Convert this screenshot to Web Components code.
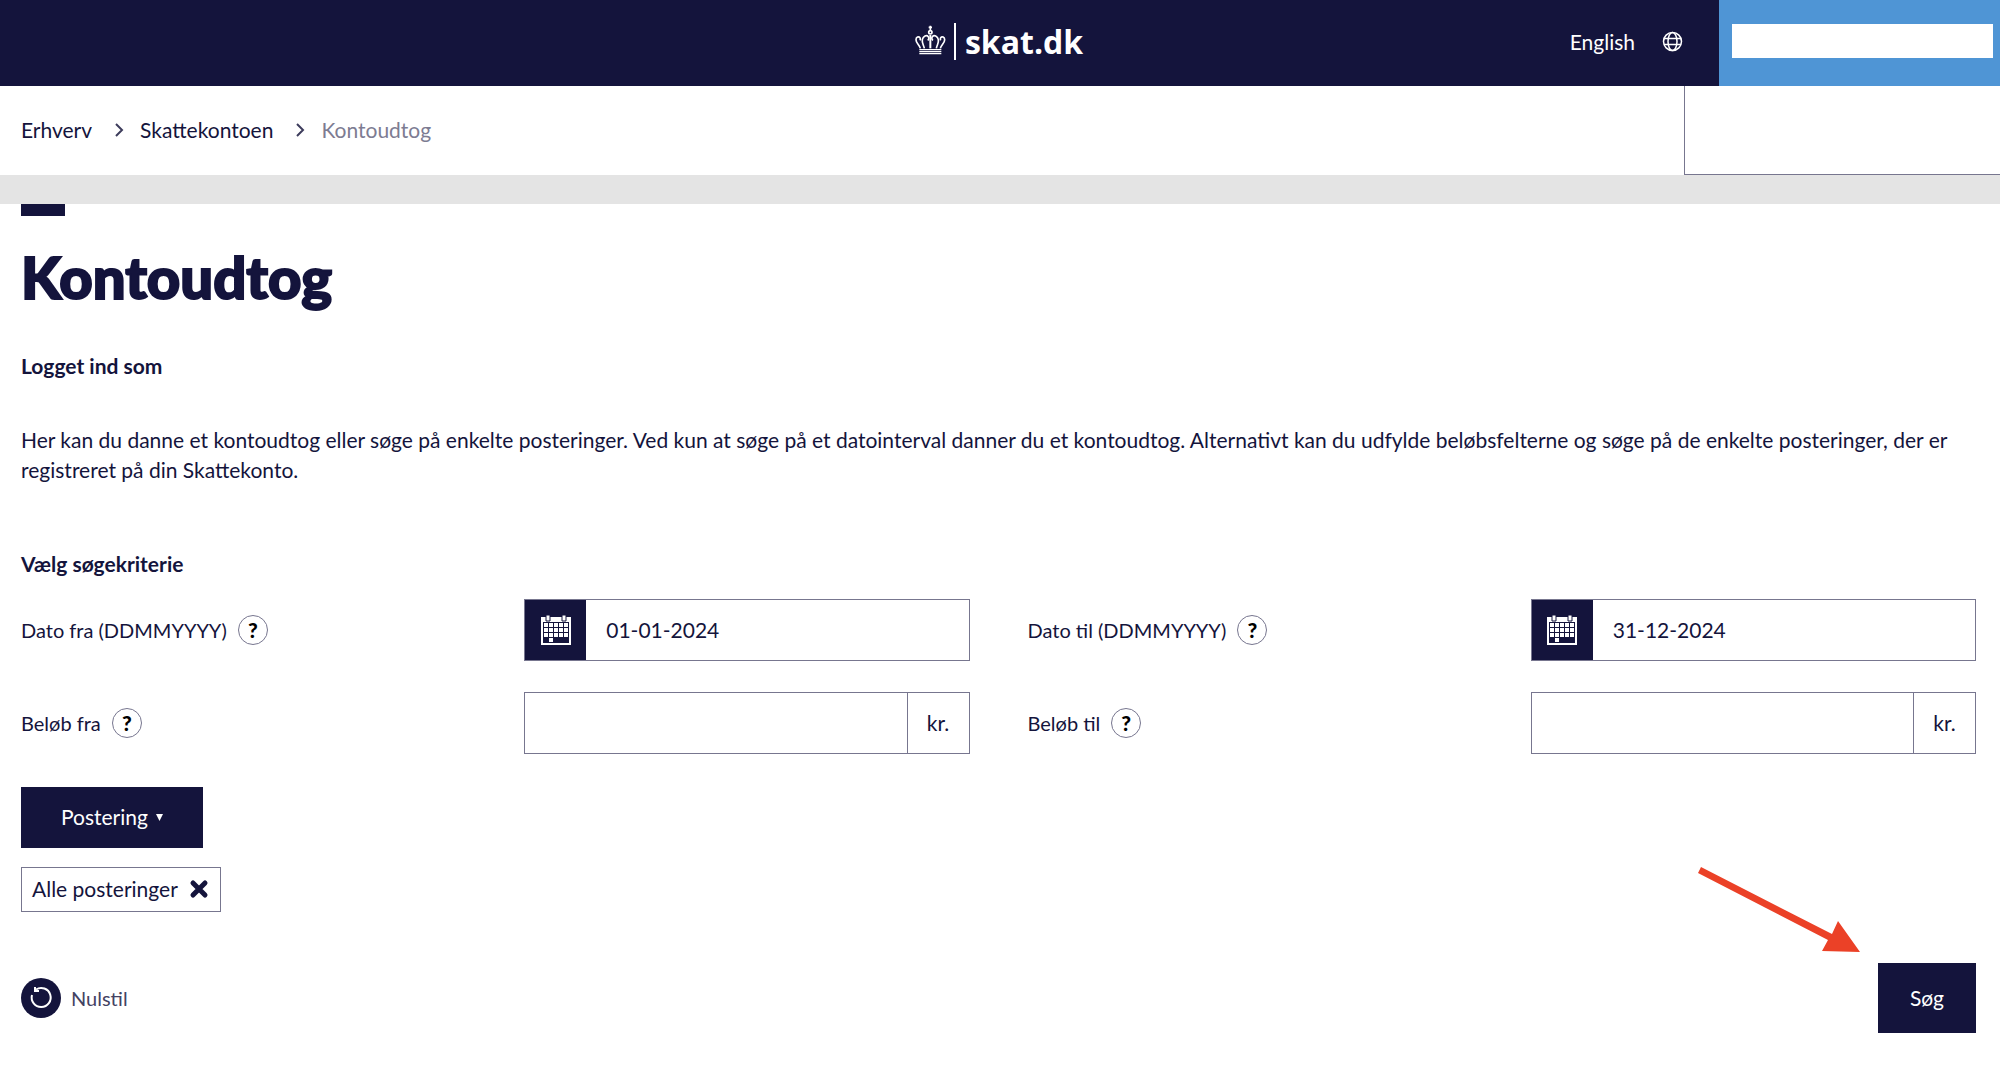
<!DOCTYPE html>
<html lang="da">
<head>
<meta charset="utf-8">
<meta name="viewport" content="width=device-width, initial-scale=1">
<title>Kontoudtog - skat.dk</title>
<style>
  :root {
    --navy: #14143c;
    --line: #77768f;
    --muted: #7d7c92;
    --blue: #4f95d5;
    --side: 21px;
  }
  body {
    margin: 0;
    background: #fff;
    color: var(--navy);
    font-family: Lato, "Liberation Sans", sans-serif;
    font-size: 21px;
    line-height: 30px;
  }
  main {
    padding: 0 24px 32px var(--side);
  }
  .fields {
    display: grid;
    grid-template-columns: 1fr 1fr;
    gap: 31px 58px;
    margin-bottom: 33px;
  }
</style>
</head>
<body>
<top-bar>English</top-bar>
<bread-crumbs>
  <crumb-link href="#erhverv">Erhverv</crumb-link>
  <crumb-link href="#skattekontoen">Skattekontoen</crumb-link>
  <crumb-link current>Kontoudtog</crumb-link>
</bread-crumbs>
<main>
  <page-intro>
    <span slot="title">Kontoudtog</span>
    <span slot="user">Logget ind som</span>
    Her kan du danne et kontoudtog eller søge på enkelte posteringer. Ved kun at søge på et datointerval danner du et kontoudtog. Alternativt kan du udfylde beløbsfelterne og søge på de enkelte posteringer, der er registreret på din Skattekonto.
    <span slot="criteria">Vælg søgekriterie</span>
  </page-intro>
  <div class="fields">
    <form-field type="date" value="01-01-2024">Dato fra (DDMMYYYY)</form-field>
    <form-field type="date" value="31-12-2024">Dato til (DDMMYYYY)</form-field>
    <form-field type="amount">Beløb fra</form-field>
    <form-field type="amount">Beløb til</form-field>
  </div>
  <posting-filter>
    Postering
    <span slot="chosen">Alle posteringer</span>
  </posting-filter>
  <form-actions>
    <span slot="reset">Nulstil</span>
    <span slot="submit">Søg</span>
  </form-actions>
</main>

<script>
// Small helper: every element gets an open root with its own markup
function render(element, html) {
  const template = document.createElement("template");
  template.innerHTML = html;
  const shadow = element.attachShadow({ mode: "open" });
  shadow.appendChild(template.content.cloneNode(true));
}

// Header with logo, language link and account area
class TopBar extends HTMLElement {
  constructor() {
    super();
    render(this, `
    <style>
      :host { display: block; }
      header {
        display: grid;
        grid-template-columns: 1fr auto 1fr;
        align-items: center;
        height: 86px;
        background: var(--navy);
      }
      a { color: #fff; text-decoration: none; }
      .logo {
        grid-column: 2;
        display: flex;
        align-items: center;
        gap: 8px;
        padding: 0 2px 3px 0;
        font-family: "Open Sans", sans-serif;
        font-size: 32px;
        font-weight: 700;
        line-height: 37px;
      }
      .logo svg { margin-bottom: 4px; }
      .logo span { border-left: 2px solid #fff; padding-left: 9px; }
      .tools {
        display: flex;
        align-items: center;
        justify-content: flex-end;
        align-self: stretch;
      }
      .language {
        display: flex;
        align-items: center;
        gap: 27px;
        margin-right: 36px;
        padding-bottom: 3px;
      }
      .account {
        box-sizing: border-box;
        align-self: stretch;
        width: 281px;
        padding: 24px 7px 28px 13px;
        background: var(--blue);
      }
      .account div { height: 100%; background: #fff; }
    </style>
    <header>
      <a class="logo" href="#" aria-label="skat.dk">
        <svg width="31" height="30" viewBox="75 73 93 90" fill="none" stroke="#fff" stroke-width="5">
          <path d="M121 75v13M116 80h10"/>
          <circle cx="121" cy="95" r="5"/>
          <path d="M121 103v40" stroke-width="6"/>
          <path d="M91 143C89 133 78 128 78 117c0-8 8-11 12-6 2 3 1 6 0 8"/>
          <path d="M103 143c-2-10-8-16-6-26 2-11 13-15 18-9 3 4 1 9-2 11"/>
          <path d="M151 143c2-10 13-15 13-26 0-8-8-11-12-6-2 3-1 6 0 8"/>
          <path d="M139 143c2-10 8-16 6-26-2-11-13-15-18-9-3 4-1 9 2 11"/>
          <path d="M88 147h66M88 153h66M88 159h66" stroke-width="4"/>
        </svg>
        <span>skat.dk</span>
      </a>
      <div class="tools">
        <a class="language" href="#english">
          <slot></slot>
          <svg width="21" height="21" viewBox="0 0 21 21" fill="none" stroke="#fff" stroke-width="1.5">
            <circle cx="10.500" cy="10.500" r="9"/>
            <ellipse cx="10.500" cy="10.500" rx="4.500" ry="9"/>
            <path d="M2 7.500h17M2 13.500h17"/>
          </svg>
        </a>
        <div class="account"><div></div></div>
      </div>
    </header>
    `);
  }
}
customElements.define("top-bar", TopBar);

class CrumbLink extends HTMLElement {
  constructor() {
    super();
    const current = this.hasAttribute("current");
    render(this, `
    <style>
      :host { display: flex; align-items: center; gap: 22px; }
      a { color: inherit; text-decoration: none; }
      span { color: var(--muted); }
    </style>
    ${current
      ? `<span aria-current="page"><slot></slot></span>`
      : `<a href="${this.getAttribute("href")}"><slot></slot></a>
         <svg width="10" height="14" viewBox="0 0 10 14" fill="none" stroke="#3d3c5c" stroke-width="2"><path d="M2 1l6 6-6 6"/></svg>`}
    `);
  }
}
customElements.define("crumb-link", CrumbLink);

class BreadCrumbs extends HTMLElement {
  constructor() {
    super();
    render(this, `
    <style>
      :host {
        display: flex;
        justify-content: space-between;
        height: 89px;
        border-bottom: 29px solid #e4e4e4;
      }
      nav {
        display: flex;
        align-items: center;
        gap: 16px;
        padding: 0 0 2px var(--side);
      }
      .panel {
        width: 315px;
        border-left: 1px solid var(--line);
        border-bottom: 1px solid var(--line);
      }
    </style>
    <nav aria-label="Brødkrumme"><slot></slot></nav>
    <div class="panel"></div>
    `);
  }
}
customElements.define("bread-crumbs", BreadCrumbs);

class PageIntro extends HTMLElement {
  constructor() {
    super();
    render(this, `
    <style>
      :host { display: block; }
      .mark { width: 44px; height: 12px; background: var(--navy); }
      h1 {
        margin: 27px 0 40px;
        font-size: 58px;
        line-height: 68px;
        font-weight: 900;
        -webkit-text-stroke: 2px var(--navy);
      }
      h2 {
        margin: 0;
        font-size: 21px;
        line-height: 30px;
        font-weight: 700;
      }
      p { margin: 44px 0 64px; }
      h2:last-child { margin-bottom: 20px; }
    </style>
    <div class="mark"></div>
    <h1><slot name="title"></slot></h1>
    <h2><slot name="user"></slot></h2>
    <p><slot></slot></p>
    <h2><slot name="criteria"></slot></h2>
    `);
  }
}
customElements.define("page-intro", PageIntro);

// Label, help button and a boxed input; type is "date" or "amount"
class FormField extends HTMLElement {
  constructor() {
    super();
    const isDate = this.getAttribute("type") === "date";
    const calendar = `
      <button class="calendar" type="button" aria-label="Vælg dato">
        <svg width="30" height="30" viewBox="0 0 30 30">
          <path d="M0 2h30v28H0z" fill="#fff"/>
          <path d="M2 7h26v21H2z" fill="#14143c"/>
          <path d="M3 8h4v4H3zM8 8h4v4H8zM13 8h4v4h-4zM18 8h4v4h-4zM23 8h4v4h-4zM3 13h4v4H3zM8 13h4v4H8zM13 13h4v4h-4zM18 13h4v4h-4zM23 13h4v4h-4zM3 18h4v4H3zM8 18h4v4H8zM13 18h4v4h-4zM18 18h4v4h-4zM23 18h4v4h-4zM8 23h4v4H8z" fill="#fff"/>
          <path d="M5 0h4v6H5zM21 0h4v6h-4z" fill="#fff" stroke="#14143c"/>
        </svg>
      </button>`;
    render(this, `
    <style>
      :host {
        display: grid;
        grid-template-columns: 1fr 1fr;
        gap: 58px;
        align-items: center;
      }
      .caption { display: flex; align-items: center; gap: 11px; font-size: 20px; }
      .help {
        width: 30px;
        height: 30px;
        padding: 0;
        border: 1px solid var(--line);
        border-radius: 50%;
        background: none;
        color: #000;
        font: 900 21px/28px Lato, sans-serif;
      }
      .box {
        display: flex;
        box-sizing: border-box;
        height: 62px;
        border: 1px solid var(--line);
      }
      input {
        flex: 1;
        min-width: 0;
        padding: 0 20px;
        border: 0;
        background: none;
        color: inherit;
        font: inherit;
      }
      .calendar {
        display: flex;
        align-items: center;
        justify-content: center;
        width: 61px;
        padding: 0;
        border: 0;
        background: var(--navy);
      }
      .unit {
        width: 61px;
        border-left: 1px solid var(--line);
        line-height: 60px;
        text-align: center;
      }
    </style>
    <div class="caption">
      <label for="field"><slot></slot></label>
      <button class="help" type="button">?</button>
    </div>
    <div class="box">
      ${isDate ? calendar : ""}
      <input id="field" type="text" value="${this.getAttribute("value") || ""}">
      ${isDate ? "" : `<span class="unit">kr.</span>`}
    </div>
    `);
  }
}
customElements.define("form-field", FormField);

class PostingFilter extends HTMLElement {
  constructor() {
    super();
    render(this, `
    <style>
      :host {
        display: flex;
        flex-direction: column;
        align-items: flex-start;
        gap: 19px;
      }
      button { font: inherit; color: inherit; }
      .toggle {
        display: flex;
        align-items: center;
        gap: 8px;
        height: 61px;
        padding: 0 40px 2px;
        border: 0;
        background: var(--navy);
        color: #fff;
      }
      .toggle svg { margin-top: 2px; }
      .chip {
        display: flex;
        align-items: center;
        gap: 11px;
        box-sizing: border-box;
        height: 45px;
        padding: 0 11px 1px 10px;
        border: 1px solid var(--line);
      }
      .chip button {
        display: flex;
        padding: 0;
        border: 0;
        background: none;
      }
    </style>
    <button class="toggle" type="button" aria-haspopup="true">
      <span><slot></slot></span>
      <svg width="7" height="7" viewBox="0 0 7 7"><path d="M0 0h7L3.500 7z" fill="#fff"/></svg>
    </button>
    <div class="chip">
      <slot name="chosen"></slot>
      <button type="button" aria-label="Fjern">
        <svg width="20" height="20" viewBox="0 0 20 20" stroke="#14143c" stroke-width="5" stroke-linecap="round"><path d="M4 4l12 12M16 4L4 16"/></svg>
      </button>
    </div>
    `);
  }
}
customElements.define("posting-filter", PostingFilter);

class FormActions extends HTMLElement {
  constructor() {
    super();
    render(this, `
    <style>
      :host {
        position: relative;
        display: flex;
        align-items: center;
        justify-content: space-between;
        margin-top: 51px;
      }
      button { border: 0; font: inherit; }
      .reset {
        display: flex;
        align-items: center;
        gap: 10px;
        padding: 0;
        background: none;
        color: #434263;
        font-size: 20px;
      }
      .submit {
        height: 70px;
        padding: 0 32px;
        background: var(--navy);
        color: #fff;
      }
      /* pointer drawn over the page, aimed at the submit button */
      .arrow { position: absolute; right: 115px; bottom: 79px; }
    </style>
    <button class="reset" type="button">
      <svg width="40" height="40" viewBox="0 0 40 40" fill="none">
        <circle cx="20" cy="20" r="20" fill="#14143c"/>
        <path d="M11 17a9.500 9.500 0 1 0 4-5.500" stroke="#fff" stroke-width="2"/>
        <path d="M14 9v4h4" stroke="#fff" stroke-width="2"/>
      </svg>
      <slot name="reset"></slot>
    </button>
    <button class="submit" type="submit"><slot name="submit"></slot></button>
    <svg class="arrow" width="163" height="87" viewBox="0 0 163 87" fill="#eb4127">
      <path d="M3 0L134 67l6-13 22 31-38-1 6-11L0 6z"/>
    </svg>
    `);
  }
}
customElements.define("form-actions", FormActions);
</script>
</body>
</html>
